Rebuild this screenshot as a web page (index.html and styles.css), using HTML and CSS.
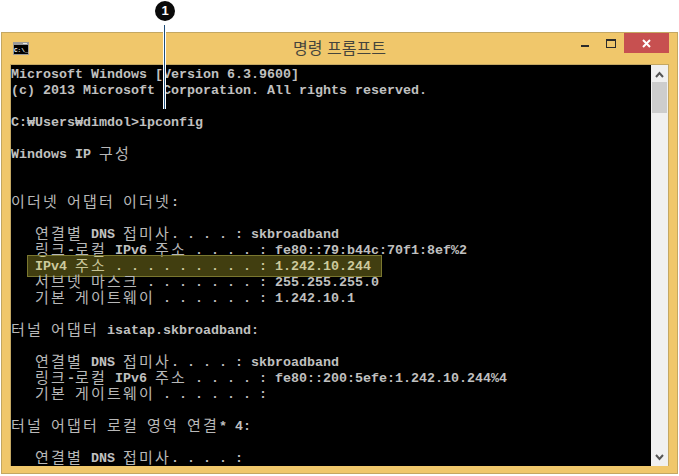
FILE: index.html
```html
<!DOCTYPE html>
<html lang="ko">
<head>
<meta charset="utf-8">
<title>명령 프롬프트</title>
<link rel="stylesheet" href="styles.css">
</head>
<body>
<div class="stage">
  <div class="callout"><span class="badge">1</span><span class="leader"></span></div>
  <div class="window">
    <div class="titlebar">
      <svg class="app-icon" width="16" height="13" viewBox="0 0 16 13"><rect x="0" y="0" width="16" height="13" fill="#9a9a9a"/><rect x="1" y="3" width="14" height="9" fill="#000"/><rect x="10" y="1" width="4" height="1" fill="#e8e8e8"/><text x="1" y="10" class="app-icon-text">C:\_</text></svg>
      <span class="title">명령 프롬프트</span>
      <div class="controls">
        <span class="btn"><span class="min"></span></span>
        <span class="btn"><span class="max"></span></span>
        <span class="btn close"><svg width="9" height="9" viewBox="0 0 9 9"><path d="M1 1L8 8M8 1L1 8" stroke="#fff" stroke-width="2" fill="none"/></svg></span>
      </div>
    </div>
    <div class="body">
      <div class="console">
        <div class="ln">Microsoft Windows [Version 6.3.9600]</div>
        <div class="ln">(c) 2013 Microsoft Corporation. All rights reserved.</div>
        <div class="ln"> </div>
        <div class="ln">C:₩Users₩dimdol&gt;ipconfig</div>
        <div class="ln"> </div>
        <div class="ln">Windows IP <span class="ko">구성</span></div>
        <div class="ln"> </div>
        <div class="ln"> </div>
        <div class="ln"><span class="ko">이더넷</span> <span class="ko">어댑터</span> <span class="ko">이더넷</span>:</div>
        <div class="ln"> </div>
        <div class="ln">   <span class="ko">연결별</span> DNS <span class="ko">접미사</span>. . . . : skbroadband</div>
        <div class="ln">   <span class="ko">링크</span>-<span class="ko">로컬</span> IPv6 <span class="ko">주소</span> . . . . : fe80::79:b44c:70f1:8ef%2</div>
        <div class="ln">   IPv4 <span class="ko">주소</span> . . . . . . . . . : 1.242.10.244<span class="hl"></span></div>
        <div class="ln">   <span class="ko">서브넷</span> <span class="ko">마스크</span> . . . . . . . : 255.255.255.0</div>
        <div class="ln">   <span class="ko">기본</span> <span class="ko">게이트웨이</span> . . . . . . : 1.242.10.1</div>
        <div class="ln"> </div>
        <div class="ln"><span class="ko">터널</span> <span class="ko">어댑터</span> isatap.skbroadband:</div>
        <div class="ln"> </div>
        <div class="ln">   <span class="ko">연결별</span> DNS <span class="ko">접미사</span>. . . . : skbroadband</div>
        <div class="ln">   <span class="ko">링크</span>-<span class="ko">로컬</span> IPv6 <span class="ko">주소</span> . . . . : fe80::200:5efe:1.242.10.244%4</div>
        <div class="ln">   <span class="ko">기본</span> <span class="ko">게이트웨이</span> . . . . . . :</div>
        <div class="ln"> </div>
        <div class="ln"><span class="ko">터널</span> <span class="ko">어댑터</span> <span class="ko">로컬</span> <span class="ko">영역</span> <span class="ko">연결</span>* 4:</div>
        <div class="ln"> </div>
        <div class="ln">   <span class="ko">연결별</span> DNS <span class="ko">접미사</span>. . . . :</div>
      </div>
      <div class="scrollbar">
        <svg class="arrow" width="9" height="7" viewBox="0 0 9 7"><path d="M1 6L4.5 2L8 6" stroke="#555" stroke-width="2" fill="none"/></svg>
        <span class="thumb"></span>
        <svg class="arrow arrow-end" width="9" height="7" viewBox="0 0 9 7"><path d="M1 1L4.5 5L8 1" stroke="#555" stroke-width="2" fill="none"/></svg>
      </div>
    </div>
  </div>
</div>
</body>
</html>
```
FILE: styles.css
```css
html, body { margin: 0; padding: 0; background: #fff; }
.stage { position: relative; width: 679px; height: 476px; padding: 32px 1px 2px 1px; box-sizing: border-box; overflow: hidden; }
.callout { position: absolute; left: 155px; top: 1px; width: 20px; z-index: 5; }
.badge { display: block; width: 20px; height: 20px; border-radius: 50%; background: #0a0a0a; color: #fff; font: bold 13px/20px "Liberation Sans", sans-serif; text-align: center; }
.leader { position: absolute; left: 9px; top: 24px; width: 1px; height: 84px; background: #1f4e79; box-shadow: 1px 0 0 #fff, -1px 0 0 #fff; }
.window { height: 100%; box-sizing: border-box; background: #f0c76b; border: 1px solid #c4a762; display: flex; flex-direction: column; padding: 0 8px 7px 8px; }
.titlebar { height: 31px; display: flex; position: relative; flex: none; }
.app-icon { flex: none; margin: 9px 0 0 3px; }
.app-icon-text { font: bold 6px "Liberation Mono", monospace; fill: #fff; }
.title { position: absolute; left: 0; right: 0; top: 2px; text-align: center; font: 16px/24px "Noto Sans CJK KR", sans-serif; color: #45443c; }
.controls { margin-left: auto; display: flex; align-self: flex-start; }
.btn { width: 26px; height: 20px; display: flex; align-items: center; justify-content: center; }
.btn.close { width: 45px; background: #c75050; }
.min { width: 8px; height: 2px; background: #2b2b2b; margin-top: 5px; }
.max { width: 8px; height: 6px; border: 1px solid #2b2b2b; border-top-width: 2px; }
.body { flex: 1; display: flex; min-height: 0; border-top: 1px solid #c4a762; border-left: 1px solid #c4a762; }
.console { flex: 1; background: #000; color: #c0c0c0; font: bold 13.33px/20px "Liberation Mono", monospace; overflow: hidden; }
.ln { height: 16px; position: relative; white-space: pre; }
.ko { display: inline-block; vertical-align: top; height: 16px; font-family: "Noto Sans CJK KR", sans-serif; font-weight: 400; font-size: 15px; line-height: 16px; letter-spacing: 2.2px; color: #b8b8b8; }
.hl { position: absolute; left: 16px; top: -2px; width: 353px; height: 20px; background: rgba(240,228,60,.27); border: 1px solid rgba(125,122,50,.95); }
.scrollbar { width: 17px; flex: none; background: #f0f0f0; display: flex; flex-direction: column; align-items: center; border-right: 1px solid #c4a762; }
.arrow { margin-top: 6px; flex: none; }
.thumb { width: 15px; height: 31px; margin-top: 4px; background: #cdcdcd; }
.arrow-end { margin-top: auto; margin-bottom: 5px; }
```
